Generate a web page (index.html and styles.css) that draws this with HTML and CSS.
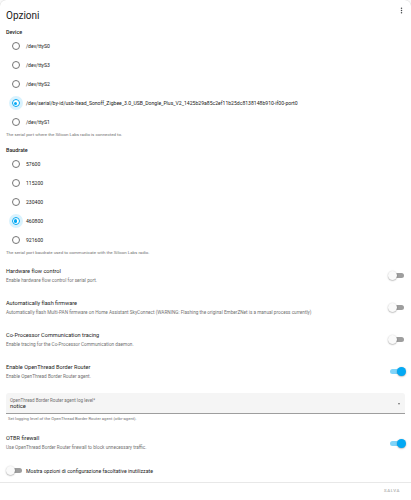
FILE: index.html
```html
<!DOCTYPE html>
<html lang="it">
<head>
  <meta charset="UTF-8" />
  <title>Opzioni</title>
  <link rel="stylesheet" href="styles.css">
</head>
<body>
  <div class="card">
    <div class="card-header">
      <h1>Opzioni</h1>
      <svg class="kebab" viewBox="0 0 24 24" width="9" height="9"><path fill="#44474b" d="M12,16A2,2 0 0,1 14,18A2,2 0 0,1 12,20A2,2 0 0,1 10,18A2,2 0 0,1 12,16M12,10A2,2 0 0,1 14,12A2,2 0 0,1 12,14A2,2 0 0,1 10,12A2,2 0 0,1 12,10M12,4A2,2 0 0,1 14,6A2,2 0 0,1 12,8A2,2 0 0,1 10,6A2,2 0 0,1 12,4Z"/></svg>
    </div>

    <div class="card-content">
      <div class="field">
        <div class="field-label">Device</div>
        <div class="radio-row"><span class="radio"></span>/dev/ttyS0</div>
        <div class="radio-row"><span class="radio"></span>/dev/ttyS3</div>
        <div class="radio-row"><span class="radio"></span>/dev/ttyS2</div>
        <div class="radio-row"><span class="radio checked"></span>/dev/serial/by-id/usb-Itead_Sonoff_Zigbee_3.0_USB_Dongle_Plus_V2_1425b29a85c2ef11b25dc8138148b910-if00-port0</div>
        <div class="radio-row"><span class="radio"></span>/dev/ttyS1</div>
        <div class="helper">The serial port where the Silicon Labs radio is connected to.</div>
      </div>

      <div class="field">
        <div class="field-label">Baudrate</div>
        <div class="radio-row"><span class="radio"></span>57600</div>
        <div class="radio-row"><span class="radio"></span>115200</div>
        <div class="radio-row"><span class="radio"></span>230400</div>
        <div class="radio-row"><span class="radio checked"></span>460800</div>
        <div class="radio-row"><span class="radio"></span>921600</div>
        <div class="helper">The serial port baudrate used to communicate with the Silicon Labs radio.</div>
      </div>

      <div class="switch-list">
        <div class="switch-row">
          <div class="switch-text">
            <div class="switch-title">Hardware flow control</div>
            <div class="switch-desc">Enable hardware flow control for serial port.</div>
          </div>
          <span class="switch"></span>
        </div>
        <div class="switch-row">
          <div class="switch-text">
            <div class="switch-title">Automatically flash firmware</div>
            <div class="switch-desc">Automatically flash Multi-PAN firmware on Home Assistant SkyConnect (WARNING: Flashing the original EmberZNet is a manual process currently)</div>
          </div>
          <span class="switch"></span>
        </div>
        <div class="switch-row">
          <div class="switch-text">
            <div class="switch-title">Co-Processor Communication tracing</div>
            <div class="switch-desc">Enable tracing for the Co-Processor Communication daemon.</div>
          </div>
          <span class="switch"></span>
        </div>
        <div class="switch-row">
          <div class="switch-text">
            <div class="switch-title">Enable OpenThread Border Router</div>
            <div class="switch-desc">Enable OpenThread Border Router agent.</div>
          </div>
          <span class="switch on"></span>
        </div>
      </div>

      <div class="select">
        <div class="select-text">
          <div class="select-label">OpenThread Border Router agent log level*</div>
          <div class="select-value">notice</div>
        </div>
        <span class="select-arrow"></span>
      </div>
      <div class="helper select-helper">Set logging level of the OpenThread Border Router agent (otbr-agent).</div>

      <div class="switch-row firewall">
        <div class="switch-text">
          <div class="switch-title">OTBR firewall</div>
          <div class="switch-desc">Use OpenThread Border Router firewall to block unnecessary traffic.</div>
        </div>
        <span class="switch on"></span>
      </div>

      <div class="optional-row">
        <span class="switch"></span>
        <span>Mostra opzioni di configurazione facoltative inutilizzate</span>
      </div>
    </div>

    <div class="card-actions">
      <button class="save-btn">Salva</button>
    </div>
  </div>
</body>
</html>
```

FILE: styles.css
```css
body {
  font-family: Roboto, 'Liberation Sans', sans-serif;
  background: #fafafa;
  margin: 0;
  color: #212121;
}

.card {
  background: white;
  border-radius: 6px;
  box-shadow: 0 0 1px rgba(0,0,0,0.25);
  min-height: 520px;
}

.card-header {
  display: flex;
  justify-content: space-between;
  align-items: flex-start;
  padding: 10px 6px 0 6px;
}

.card-header h1 {
  margin: 0;
  font-size: 10px;
  line-height: 12px;
  font-weight: 400;
}

.kebab {
  margin-top: -4px;
  margin-right: -1px;
}

.card-content {
  padding: 7px 6px 0 6px;
}

.field + .field {
  margin-top: 9px;
}

.field-label {
  font-size: 5.4px;
  line-height: 7px;
  font-weight: 500;
}

.radio-row {
  display: flex;
  align-items: center;
  height: 19.2px;
  font-size: 5.1px;
  color: #212121;
  white-space: nowrap;
}

.radio {
  box-sizing: border-box;
  width: 8px;
  height: 8px;
  border: 0.8px solid #757575;
  border-radius: 50%;
  margin: 0 6.5px 0 5.5px;
  position: relative;
  flex-shrink: 0;
}

.radio.checked {
  border-color: #03a9f4;
  box-shadow: 0 0 0 3px rgba(3,169,244,0.15);
}

.radio.checked::after {
  content: "";
  position: absolute;
  top: 1.4px;
  left: 1.4px;
  width: 3.6px;
  height: 3.6px;
  border-radius: 50%;
  background: #03a9f4;
}

.helper {
  font-size: 4.4px;
  line-height: 6px;
  color: #727272;
}

.switch-list {
  margin-top: 4px;
}

.switch-row {
  display: flex;
  align-items: center;
  justify-content: space-between;
  padding: 8px 0;
}

.switch-title {
  font-size: 5.6px;
  line-height: 7px;
}

.switch-desc {
  font-size: 4.7px;
  line-height: 7px;
  margin-top: 2px;
  color: #727272;
}

.switch {
  position: relative;
  width: 14px;
  height: 5px;
  border-radius: 3px;
  background: #9e9e9e;
  margin-right: 1px;
  flex-shrink: 0;
}

.switch::after {
  content: "";
  position: absolute;
  top: -2px;
  left: -2px;
  width: 9px;
  height: 9px;
  border-radius: 50%;
  background: #fafafa;
  box-shadow: 0 0.5px 1.5px rgba(0,0,0,0.4);
}

.switch.on {
  background: rgba(3,169,244,0.5);
}

.switch.on::after {
  left: 7px;
  background: #03a9f4;
}

.select {
  display: flex;
  align-items: center;
  justify-content: space-between;
  margin-top: 5px;
  padding: 5.5px 4px 3px 4px;
  background: #f5f5f5;
  border-bottom: 0.8px solid #9e9e9e;
  border-radius: 3px 3px 0 0;
}

.select-label {
  font-size: 4.5px;
  line-height: 5px;
  color: #6f6f6f;
}

.select-value {
  font-size: 5.8px;
  line-height: 7px;
}

.select-arrow {
  width: 0;
  height: 0;
  border-left: 1.6px solid transparent;
  border-right: 1.6px solid transparent;
  border-top: 2px solid #6f6f6f;
  margin-right: 1px;
}

.select-helper {
  margin-top: 2px;
  padding-left: 2px;
  font-size: 4.2px;
}

.firewall {
  margin-top: 5px;
}

.optional-row {
  display: flex;
  align-items: center;
  height: 23px;
  font-size: 5.2px;
}

.optional-row .switch {
  margin: 0 4px 0 2px;
}

.card-actions {
  display: flex;
  justify-content: flex-end;
  border-top: 1px solid #e8e8e8;
  padding: 3px 8px 6px 0;
}

.save-btn {
  background: none;
  border: none;
  padding: 2px 3px;
  font-family: inherit;
  font-size: 4.4px;
  font-weight: 500;
  letter-spacing: 0.6px;
  text-transform: uppercase;
  color: #b0b0b0;
}
```
